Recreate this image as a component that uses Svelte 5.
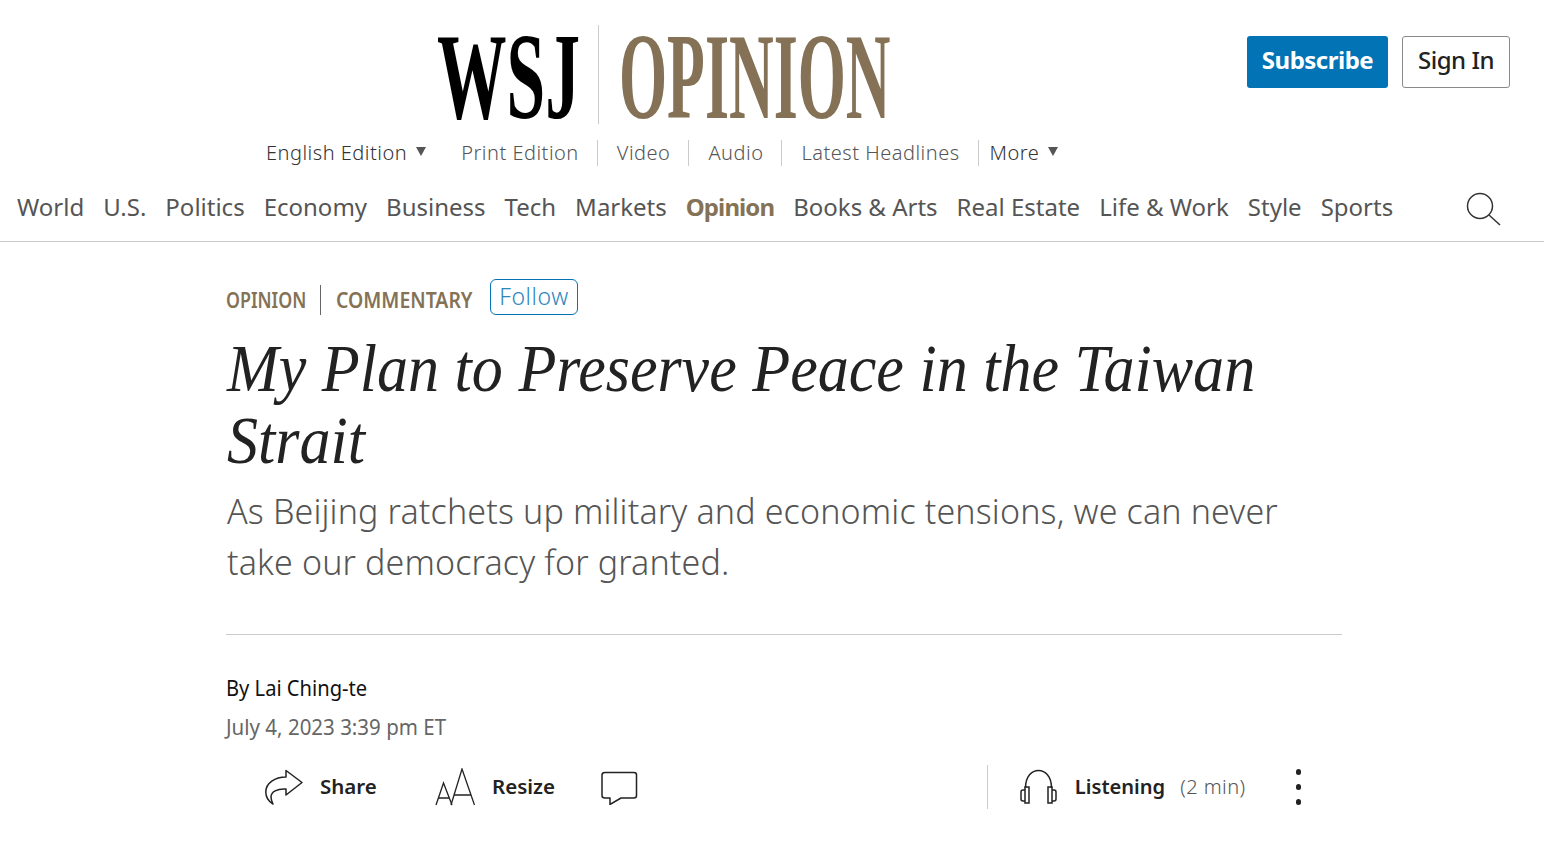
<script>
  const editionLinks = ['Print Edition', 'Video', 'Audio', 'Latest Headlines'];
  const sections = ['World', 'U.S.', 'Politics', 'Economy', 'Business', 'Tech', 'Markets', 'Opinion', 'Books & Arts', 'Real Estate', 'Life & Work', 'Style', 'Sports'];
</script>

<header class="masthead">
  <div class="top">
    <svg class="logo" width="460" height="100" viewBox="0 0 460 100" role="img" aria-label="WSJ Opinion">
      <text class="wsj" transform="translate(-1 93) scale(0.57 1)">WSJ</text>
      <line x1="160.500" y1="0" x2="160.500" y2="99" stroke="#ccc" />
      <text class="op" transform="translate(181 93) scale(0.507 1)">OPINION</text>
    </svg>
    <div class="auth">
      <button class="subscribe">Subscribe</button>
      <button class="signin">Sign In</button>
    </div>
  </div>

  <nav class="editions">
    <span class="edition">English Edition<i class="caret"></i></span>
    {#each editionLinks as link}
      <a href="#top" class="ed-link">{link}</a>
    {/each}
    <span class="more">More<i class="caret"></i></span>
  </nav>

  <nav class="sections">
    {#each sections as s}
      <a href="#top" class:active={s === 'Opinion'}>{s}</a>
    {/each}
    <svg class="search" width="36" height="36" viewBox="0 0 36 36" fill="none" stroke="#333" stroke-width="1.500">
      <circle cx="14" cy="16" r="12.500" />
      <line x1="23" y1="25" x2="34" y2="35" />
    </svg>
  </nav>
</header>

<main class="article">
  <div class="flags">
    <span class="flag first"><span>OPINION</span></span>
    <span class="flag"><span>COMMENTARY</span></span>
    <button class="follow">Follow</button>
  </div>
  <h1>My Plan to Preserve Peace in the Taiwan Strait</h1>
  <h2>As Beijing ratchets up military and economic tensions, we can never take our democracy for granted.</h2>
  <hr />
  <div class="byline">By Lai Ching-te</div>
  <div class="stamp">July 4, 2023 3:39 pm ET</div>

  <div class="tools">
    <div class="tool share">
      <svg width="38" height="36" viewBox="0 0 38 36" fill="none" stroke="#222" stroke-width="1.500" stroke-linejoin="round">
        <path d="M21 1.500 L37 13.500 L21 26 V20 C12 19.500 6 23 6 28 C6 31 7 33 8 35 C3 32 0.800 28 0.800 23 C0.800 14 10 8 21 8 Z" />
      </svg>
      <b>Share</b>
    </div>
    <div class="tool resize">
      <svg width="40" height="38" viewBox="0 0 40 38" fill="none" stroke="#222" stroke-width="1.300">
        <path d="M1 37 L8.500 15 L17 37 M3.500 30 H14.500" />
        <path d="M16 37 L27 1 L39.500 37 M18.500 27 H36.500" />
      </svg>
      <b>Resize</b>
    </div>
    <svg class="comment" width="38" height="36" viewBox="0 0 38 36" fill="none" stroke="#222" stroke-width="1.500" stroke-linejoin="round">
      <path d="M4 3.500 H33 Q35.500 3.500 35.500 6 V26.500 Q35.500 29 33 29 H20 L9 35.500 V29 H4 Q1 29 1 26.500 V6 Q1 3.500 4 3.500 Z" />
    </svg>
    <div class="listen">
      <svg width="38" height="36" viewBox="0 0 38 36" fill="none" stroke="#222" stroke-width="1.500">
        <path d="M5.500 19 C5.500 7 12 1.500 18.500 1.500 C25 1.500 31.500 7 31.500 19" />
        <path d="M5 18 H9 V34 H5 Z M5 21 H3 Q1 21 1 23 V30 Q1 32 3 32 H5" />
        <path d="M32 18 H28 V34 H32 Z M32 21 H34 Q36 21 36 23 V30 Q36 32 34 32 H32" />
      </svg>
      <b>Listening</b>
      <span class="mins">(2 min)</span>
      <div class="dots"><i></i><i></i><i></i></div>
    </div>
  </div>
</main>

<style>
  :global(body) {
    margin: 0;
    background: #fff;
    font-family: "Noto Sans", sans-serif;
    color: #222;
  }

  .masthead {
    height: 241px;
    border-bottom: 1px solid #ccc;
  }

  .top {
    display: flex;
    justify-content: space-between;
    padding: 25px 34px 0 438px;
    height: 109px;
  }

  .logo {
    overflow: visible;
  }

  .logo text {
    font-family: "Liberation Serif", serif;
    font-size: 122px;
    font-weight: 700;
  }

  .wsj {
    fill: #000;
  }

  .op {
    fill: #857256;
  }

  .auth {
    display: flex;
    gap: 14px;
    padding-top: 11px;
  }

  .auth button {
    height: 52px;
    border-radius: 3px;
    font-family: inherit;
    font-size: 24px;
    padding: 0 0 5px;
    letter-spacing: -0.5px;
  }

  .subscribe {
    width: 141px;
    background: #0274b6;
    border: none;
    color: #fff;
    font-weight: 700;
  }

  .signin {
    width: 108px;
    background: #fff;
    border: 1px solid #888;
    color: #222;
    font-weight: 500;
  }

  .editions {
    display: flex;
    align-items: center;
    height: 38px;
    padding-left: 266px;
    font-size: 20px;
    line-height: 26px;
    font-weight: 300;
    letter-spacing: 0.500px;
    color: #555;
  }

  .edition {
    display: flex;
    align-items: center;
    color: #333;
    margin-right: 35px;
    white-space: nowrap;
  }

  .caret {
    display: block;
    width: 0;
    height: 0;
    margin: 0 0 3px 9px;
    border: 5px solid transparent;
    border-top: 9px solid #555;
    border-bottom: none;
  }

  .ed-link {
    color: #555;
    text-decoration: none;
    padding-right: 18px;
    margin-right: 19px;
    border-right: 1px solid #ccc;
    white-space: nowrap;
  }

  .ed-link:nth-of-type(4) {
    margin-right: 0;
  }

  .more {
    display: flex;
    align-items: center;
    margin-left: 11px;
    white-space: nowrap;
    color: #333;
  }

  .sections {
    display: flex;
    align-items: center;
    gap: 19px;
    height: 56px;
    padding: 12px 0 0 17px;
    box-sizing: border-box;
    font-size: 24px;
    position: relative;
  }

  .sections a {
    color: #555;
    text-decoration: none;
    white-space: nowrap;
  }

  .sections a.active {
    color: #857256;
    font-weight: 700;
    letter-spacing: -0.900px;
  }

  .search {
    position: absolute;
    left: 1466px;
    top: 18px;
  }

  .article {
    width: 1116px;
    margin-left: 226px;
    padding-top: 37px;
  }

  .flags {
    display: flex;
    align-items: center;
    height: 36px;
  }

  .flag {
    width: 136px;
    color: #857256;
    font-weight: 600;
    font-size: 22px;
    line-height: 30px;
    margin-top: 6px;
    white-space: nowrap;
  }

  .flag span {
    display: inline-block;
    transform: scaleX(0.883) translateY(-1px);
    transform-origin: left center;
  }

  .flag.first {
    width: 80px;
    padding-right: 14px;
    margin-right: 15px;
    border-right: 1px solid #666;
  }

  .flag.first span {
    transform: scaleX(0.808) translateY(-1px);
  }

  .follow {
    margin-left: 18px;
    width: 88px;
    height: 36px;
    padding: 0 0 2px;
    background: #fff;
    border: 1px solid #0274b6;
    border-radius: 6px;
    color: #2e86bd;
    font-family: inherit;
    font-size: 23px;
    font-weight: 300;
    letter-spacing: 0.600px;
  }

  h1 {
    width: 1222px;
    margin: 17px 0 0 1px;
    font-family: "Liberation Serif", serif;
    font-style: italic;
    font-weight: 400;
    font-size: 68px;
    line-height: 72px;
    color: #222;
    transform: scaleX(0.913);
    transform-origin: left top;
  }

  h2 {
    margin: 10px 0 0 1px;
    font-weight: 300;
    font-size: 34px;
    line-height: 51px;
    letter-spacing: 0.150px;
    color: #555;
  }

  hr {
    margin: 46px 0 0;
    border: none;
    border-top: 1px solid #ccc;
  }

  .byline {
    margin-top: 37px;
    font-size: 22px;
    line-height: 30px;
    color: #111;
    transform: scaleX(0.915);
    transform-origin: left center;
  }

  .stamp {
    margin-top: 9px;
    font-size: 22px;
    line-height: 30px;
    color: #666;
    transform: scaleX(0.932);
    transform-origin: left center;
  }

  .tools {
    display: flex;
    align-items: center;
    height: 44px;
    margin-top: 24px;
    padding-left: 39px;
  }

  .tool {
    display: flex;
    align-items: center;
    gap: 17px;
    font-size: 20.500px;
  }

  .tool b, .listen b {
    font-weight: 600;
    margin-bottom: 2px;
  }

  .share {
    width: 170px;
  }

  .resize {
    width: 166px;
  }

  .listen {
    display: flex;
    align-items: center;
    margin-left: auto;
    margin-right: 41px;
    height: 44px;
    border-left: 1px solid #ccc;
    padding-left: 32px;
    font-size: 20.100px;
  }

  .listen b {
    margin-left: 17px;
  }

  .mins {
    margin-left: 15px;
    margin-bottom: 2px;
    color: #555;
    font-weight: 300;
    letter-spacing: 0.400px;
  }

  .dots {
    display: flex;
    flex-direction: column;
    gap: 9.500px;
    margin-left: 50px;
  }

  .dots i {
    width: 5.500px;
    height: 5.500px;
    border-radius: 50%;
    background: #222;
  }
</style>
